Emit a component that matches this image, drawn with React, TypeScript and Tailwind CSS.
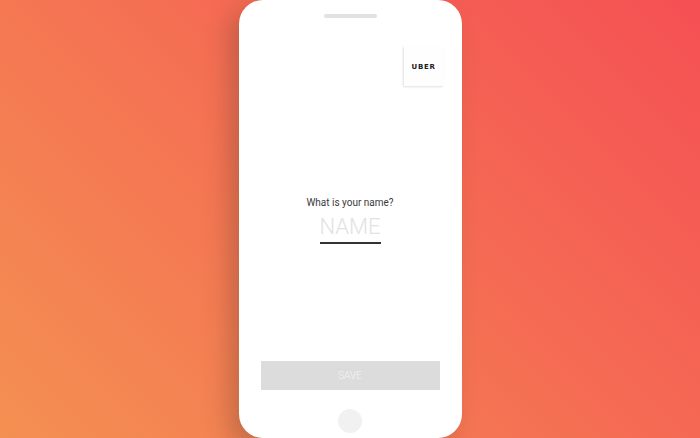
import { useState } from 'react'
import type { FormEvent } from 'react'

function BrandTile() {
  return (
    <div className="-mr-1 flex h-10 w-10 items-center justify-center self-end bg-[#fefefe] pt-0.5 shadow-[-1px_1px_2px_rgba(0,0,0,0.12)]">
      <span className="font-['DejaVu_Sans',sans-serif] text-[7px] leading-none font-bold tracking-widest text-[#1c1c22]">
        UBER
      </span>
    </div>
  )
}

function NameForm() {
  const [name, setName] = useState('')

  const handleSubmit = (e: FormEvent) => {
    e.preventDefault()
  }

  return (
    <form onSubmit={handleSubmit} className="flex flex-1 flex-col">
      <div className="flex flex-1 flex-col items-center justify-center pb-[9px]">
        <label htmlFor="name" className="text-[10px] leading-4 text-[#3a3a3a]">
          What is your name?
        </label>
        <input
          id="name"
          type="text"
          value={name}
          onChange={(e) => setName(e.target.value)}
          placeholder="NAME"
          className="h-[33px] w-[61px] border-b-2 border-[#333333] bg-transparent text-center text-[22px] font-light text-[#333333] placeholder:text-[#e2e2e2] focus:outline-none"
        />
      </div>
      <button
        type="submit"
        className="h-[29px] w-full bg-[#dcdcdc] text-[10px] font-light text-[#f4f4f4]"
      >
        SAVE
      </button>
    </form>
  )
}

export default function App() {
  return (
    <div className="flex min-h-screen justify-center bg-linear-[45deg,#f49052,#f55054] font-['Roboto',sans-serif]">
      <div className="flex w-full max-w-[223px] flex-col rounded-3xl bg-white px-[22px] pt-[14px] pb-[5px] shadow-[-10px_10px_24px_rgba(90,60,40,0.3)]">
        <div className="mb-[28px] h-1 w-[53px] self-center rounded-full bg-[#e2e2e2]" />
        <BrandTile />
        <NameForm />
        <button
          type="button"
          aria-label="Home"
          className="mt-[19px] h-6 w-6 self-center rounded-full bg-[#f1f1f1]"
        />
      </div>
    </div>
  )
}
